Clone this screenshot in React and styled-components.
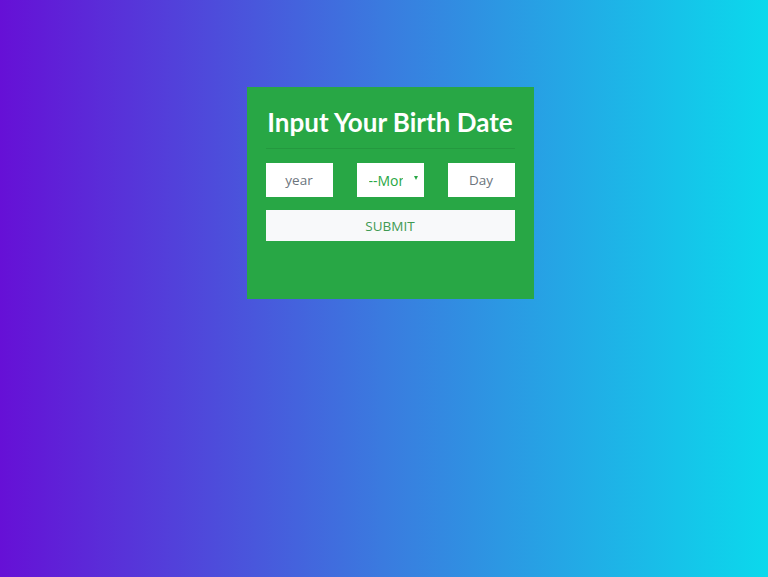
import React from 'react'
import styled, { createGlobalStyle } from 'styled-components'

const GlobalStyle = createGlobalStyle`
  html, body {
    margin: 0;
    padding: 0;
  }
  body {
    font-family: "Open Sans", "Noto Sans", sans-serif;
  }
`

const Page = styled.div`
  width: 100%;
  height: 577px;
  background: linear-gradient(to right, #6610d6, #3a7bdf 50%, #0bd9ec);
  display: flex;
  justify-content: center;
  align-items: flex-start;
  padding-top: 87px;
  padding-left: 12px;
  box-sizing: border-box;
`

const Card = styled.form`
  width: 287px;
  height: 212px;
  background-color: #28a745;
  padding: 17px 19px 0 19px;
  box-sizing: border-box;
  display: flex;
  flex-direction: column;
`

const Title = styled.h1`
  margin: 0;
  color: #fff;
  font-family: "Lato", "Open Sans", sans-serif;
  font-size: 26px;
  font-weight: 700;
  text-align: center;
  line-height: 36px;
  white-space: nowrap;
`

const Divider = styled.hr`
  margin: 8px 0 14px 0;
  border: 0;
  border-top: 1px solid rgba(0, 0, 0, 0.08);
`

const Row = styled.div`
  display: flex;
  justify-content: space-between;
`

const Field = styled.input`
  width: 67px;
  height: 34px;
  border: 0;
  background: #fff;
  text-align: center;
  font-family: inherit;
  font-size: 13.5px;
  color: #495057;
  box-sizing: border-box;
  padding: 0;
  &::placeholder {
    color: #6c757d;
  }
`

const SelectWrap = styled.div`
  position: relative;
  width: 67px;
  height: 34px;
  background: #fff;
`

const Select = styled.select`
  width: 100%;
  height: 100%;
  border: 0;
  background: transparent;
  appearance: none;
  font-family: inherit;
  font-size: 14px;
  color: #28a745;
  padding: 0 21px 0 12px;
  overflow: hidden;
  text-overflow: clip;
`

const Caret = styled.span`
  position: absolute;
  right: 6px;
  top: 13px;
  width: 0;
  height: 0;
  border-left: 2.5px solid transparent;
  border-right: 2.5px solid transparent;
  border-top: 4px solid #28a745;
  pointer-events: none;
`

const Submit = styled.button`
  margin-top: 13px;
  height: 31px;
  border: 0;
  background: #f8f9fa;
  color: #3f9a52;
  font-family: inherit;
  font-size: 13.5px;
  text-transform: uppercase;
  padding: 0;
`

export default function App() {
  return (
    <>
      <GlobalStyle />
      <Page>
        <Card onSubmit={(e) => e.preventDefault()}>
          <Title>Input Your Birth Date</Title>
          <Divider />
          <Row>
            <Field placeholder="year" />
            <SelectWrap>
              <Select defaultValue="">
                <option value="">--Month--</option>
              </Select>
              <Caret />
            </SelectWrap>
            <Field placeholder="Day" />
          </Row>
          <Submit type="submit">Submit</Submit>
        </Card>
      </Page>
    </>
  )
}
